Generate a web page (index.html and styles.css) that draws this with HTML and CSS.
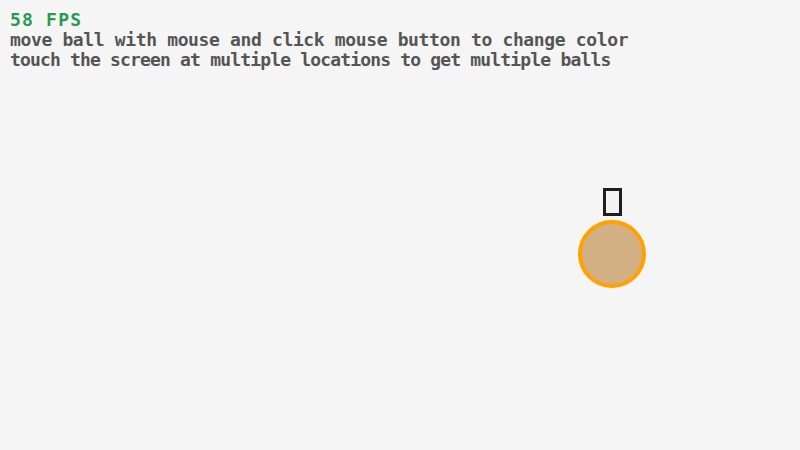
FILE: index.html
```html
<!DOCTYPE html>
<html>
<head>
<meta charset="utf-8">
<link rel="stylesheet" href="styles.css">
</head>
<body>
<div class="screen">
  <div class="info">
    <div class="fps">58 FPS</div>
    <div class="line line-wide">move ball with mouse and click mouse button to change color</div>
    <div class="line line-narrow">touch the screen at multiple locations to get multiple balls</div>
  </div>
  <div class="label"></div>
  <div class="ball"></div>
</div>
</body>
</html>
```
FILE: styles.css
```css
html, body {
  margin: 0;
  padding: 0;
  background: #f5f5f5;
}
.screen {
  position: relative;
  width: 800px;
  height: 450px;
  background: #f5f5f5;
  overflow: hidden;
}
.info {
  padding: 10px 0 0 10px;
  font-family: "DejaVu Sans Mono", monospace;
  font-weight: bold;
  font-size: 18px;
  line-height: 20px;
  color: #555555;
  white-space: nowrap;
}
.fps {
  color: #2a9a50;
  letter-spacing: 1.2px;
}
.line-wide {
  letter-spacing: -0.36px;
}
.line-narrow {
  letter-spacing: -0.83px;
}
.label {
  position: absolute;
  left: 603px;
  top: 188px;
  width: 19px;
  height: 28px;
  box-sizing: border-box;
  border: 3px solid #1e1e1e;
  background: #f2f2f2;
  filter: blur(0.4px);
}
.ball {
  position: absolute;
  left: 578px;
  top: 220px;
  width: 68px;
  height: 68px;
  box-sizing: border-box;
  border-radius: 50%;
  border: 4px solid #ffa100;
  background: #d3b083;
}
```
